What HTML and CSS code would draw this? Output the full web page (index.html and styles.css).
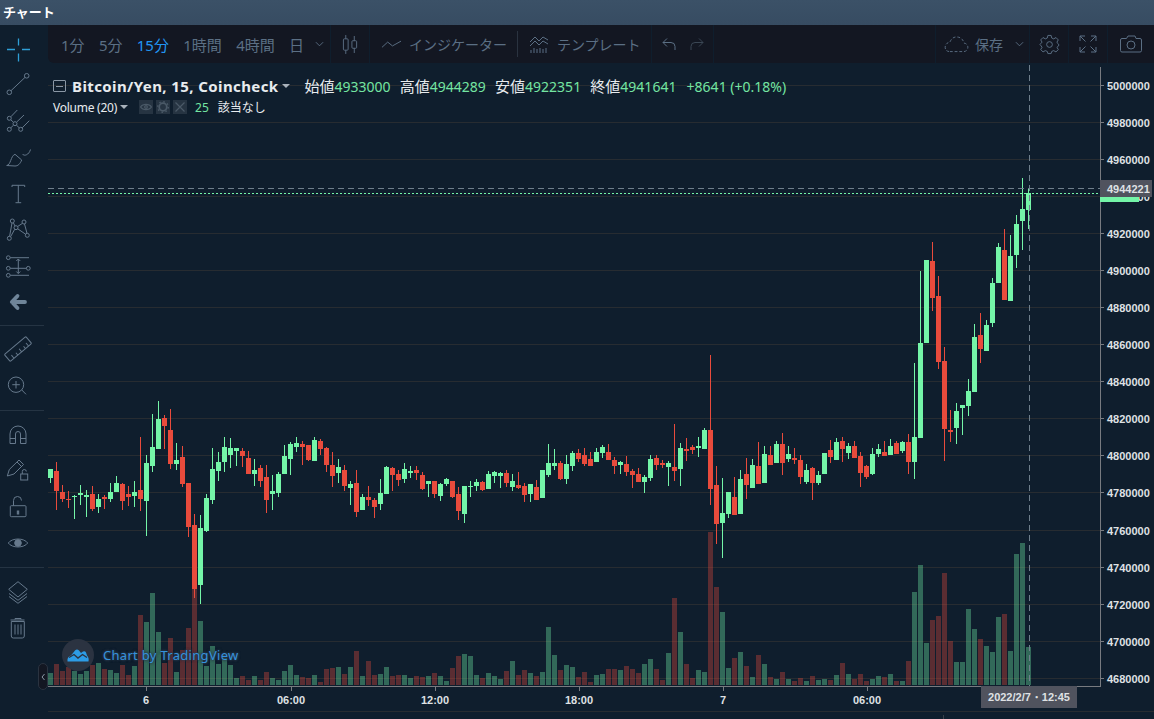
FILE: index.html
```html
<!DOCTYPE html>
<html lang="ja">
<head>
    <meta charset="UTF-8">
    <title>チャート</title>
    <link rel="stylesheet" href="styles.css">
</head>
<body>
    <header class="titlebar">チャート</header>
    <div class="main">
        <!-- 左ツールバー -->
        <aside class="sidebar">
            <div class="tool-group">
                <div class="tool"><svg viewBox="0 0 28 28" class="blue"><path d="M3 13.5h8M18 13.5h8M14.5 2.500v7M14.500 17.500v8"/></svg></div>
                <div class="tool"><svg viewBox="0 0 28 28"><circle cx="5.300" cy="20.300" r="2.300"/><circle cx="22.700" cy="3.800" r="2.300"/><path d="M7 18.700L21 5.400"/></svg></div>
                <div class="tool"><svg viewBox="0 0 28 28"><circle cx="5.300" cy="10.300" r="2"/><circle cx="11" cy="15.700" r="2"/><circle cx="5.300" cy="21.300" r="2"/><circle cx="16.700" cy="21.300" r="2"/><path d="M6.800 8.800L13.300 2M12.500 14.200L20 7M18.200 19.800L25.300 12.700M6.700 11.700L9.500 14.300M12.500 17.200L15.300 19.900M6.800 19.800L9.500 17.200"/></svg></div>
                <div class="tool"><svg viewBox="0 0 28 28"><path d="M2.700 21.500C7 21 6.500 12 11 10.300L17.700 16C16 20 14 22 11 22ZM18.500 10C20 12.500 25 11 26.500 5.500"/></svg></div>
                <div class="tool"><svg viewBox="0 0 28 28"><path d="M8 7V5.300H20.700V7M14.300 5.300V22.700M11.500 22.700H17.200"/></svg></div>
                <div class="tool"><svg viewBox="0 0 28 28"><circle cx="8.300" cy="5" r="2"/><circle cx="20" cy="6" r="2"/><circle cx="12" cy="11.700" r="2"/><circle cx="23.300" cy="19.300" r="2"/><circle cx="5.300" cy="22.300" r="2"/><path d="M5.600 20.300L8 7M9.300 6.700L11 10M13.600 10.500L18.500 7.300M20.500 8L23 17.300M13.700 12.800L21.600 18.200M10.700 13.300L6.600 20.700"/></svg></div>
                <div class="tool"><svg viewBox="0 0 28 28"><circle cx="4.300" cy="5.700" r="1.900"/><circle cx="4.300" cy="16.300" r="1.900"/><circle cx="4.300" cy="23.300" r="1.900"/><circle cx="24.300" cy="16.300" r="1.900"/><path d="M6.300 5.700H25M6.300 16.300H22.300M6.300 23.300H25M14.300 7V21.500M12.300 9L14.300 7L16.300 9M12.300 19.500L14.300 21.500L16.300 19.500"/></svg></div>
                <div class="tool"><svg viewBox="0 0 28 28" class="back"><path d="M21 14H8M13.500 8L7.800 14L13.500 20"/></svg></div>
            </div>
            <div class="tool-group mid">
                <div class="tool"><svg viewBox="0 0 28 28"><g transform="rotate(-40 14 14)"><rect x="0" y="9.500" width="28" height="9" rx="1"/><path d="M5 18.500v-4M10 18.500v-3M15 18.500v-4M20 18.500v-3M24 18.500v-4"/></g></svg></div>
                <div class="tool"><svg viewBox="0 0 28 28"><circle cx="12" cy="13.700" r="7.700"/><path d="M17.800 19L22 23.300M12 10v7.500M8.300 13.700h7.500"/></svg></div>
            </div>
            <div class="tool-group">
                <div class="tool"><svg viewBox="0 0 28 28"><path d="M6 22.500V13a8 8 0 0 1 16 0V22.500H16.500V13a2.500 2.500 0 0 0-5 0V22.500ZM6 17.500h5.500M16.500 17.500H22"/></svg></div>
                <div class="tool"><svg viewBox="0 0 28 28"><g transform="translate(0 -2)"><path d="M3.300 21L5.300 14.500L15 5L19.500 9.500L10 19ZM13 7L17.500 11.500"/><rect x="16.700" y="19" width="7" height="6"/><path d="M18.300 19V16.500a2 2 0 0 1 4 0"/></g></svg></div>
                <div class="tool"><svg viewBox="0 0 28 28"><rect x="6.300" y="12.700" width="15.700" height="11" rx="1"/><path d="M9.500 12.700V7.500a4 4 0 0 1 8 0"/><rect x="13.300" y="18" width="1.400" height="3" class="solid"/></svg></div>
                <div class="tool"><svg viewBox="0 0 28 28"><path d="M4.300 14C8 8.700 20 8.700 23.700 14C20 19.300 8 19.300 4.300 14Z"/><circle cx="14" cy="14" r="3.300" class="solid"/></svg></div>
            </div>
            <div class="tool-group last">
                <div class="tool"><svg viewBox="0 0 28 28"><path d="M14 3.700L23.300 11.300L14 19L4.700 11.300ZM5 15.500L14 22.300L23 15.500M5 18.500L14 25.300L23 18.500"/></svg></div>
                <div class="tool"><svg viewBox="0 0 28 28"><path d="M6.500 6H20.500M11 5.500V4.500H17V5.500M7.300 7.500H20.300V22a2 2 0 0 1-2 2H9.300a2 2 0 0 1-2-2ZM11 10.500V20.500M14 10.500V20.500M17 10.500V20.500"/></svg></div>
            </div>
            <button class="collapse"><svg viewBox="0 0 8 12"><path d="M5.500 3L3 6L5.500 9"/></svg></button>
        </aside>

        <div class="content">
            <!-- 上ツールバー -->
            <nav class="toolbar">
                <div class="panel intervals">
                    <span>1分</span><span>5分</span><span class="on">15分</span><span>1時間</span><span>4時間</span><span class="day">日</span>
                    <svg class="chev" viewBox="0 0 10 6"><path d="M1 1L5 5L9 1"/></svg>
                </div>
                <div class="panel p-candle">
                    <svg class="ic" viewBox="0 0 18 22"><path d="M4 1V5M4 17V21M13 2V7M13 15V20"/><rect x="1.500" y="5" width="5" height="12" rx="1"/><rect x="10.500" y="7" width="5" height="8" rx="1"/></svg>
                </div>
                <div class="panel p-ind">
                    <svg class="ic wave" viewBox="0 0 22 10"><path d="M1 8.500L7 3L12 7L21 2"/></svg>
                    <span class="ind-text">インジケーター</span>
                    <i class="sep"></i>
                    <svg class="ic tmpl" viewBox="0 0 20 20"><path d="M1 8L6 3L10 7L14 3L19 6M1 12L6 7L10 11L14 7L19 10M2 19V16M5 19V14M8 19V15M11 19V14M14 19V15M17 19V14"/></svg>
                    <span>テンプレート</span>
                </div>
                <div class="panel p-undo">
                    <svg class="ic arrow" viewBox="0 0 14 14"><path d="M5 1.500L1 5.500L5 9.500M1 5.500H9a4 4 0 0 1 4 4V13"/></svg>
                    <svg class="ic arrow dim" viewBox="0 0 14 14"><path d="M9 1.500L13 5.500L9 9.500M13 5.500H5a4 4 0 0 0-4 4V13"/></svg>
                </div>
                <div class="spacer"></div>
                <div class="panel p-save">
                    <svg class="ic cloud" viewBox="0 0 26 18"><path stroke-dasharray="3 2" d="M6 16.500H20a4.500 4.500 0 0 0 1-9C20 3.500 17 1 13 1C9 1 7 4 6 6.500C3 7 1 9 1 12C1 15 3 16.500 6 16.500Z"/></svg>
                    <span>保存</span>
                    <svg class="chev" viewBox="0 0 10 6"><path d="M1 1L5 5L9 1"/></svg>
                </div>
                <div class="panel p-icon">
                    <svg class="ic gear" viewBox="0 0 22 22"><circle cx="11" cy="11" r="3"/><path d="M9.300 1.500H12.700L13.300 4.200L15.400 5.100L17.800 3.700L20.200 6.200L18.800 8.500L19.700 10L21 11.500L19.700 13.300L18.800 14L20.200 16.300L17.800 18.800L15.400 17.400L13.300 18.300L12.700 20.500H9.300L8.700 18.300L6.600 17.400L4.200 18.800L1.800 16.300L3.200 14L2.300 12.500L1 11L2.300 9.500L3.200 8.500L1.800 6.200L4.200 3.700L6.600 5.100L8.700 4.200Z"/></svg>
                </div>
                <div class="panel p-icon">
                    <svg class="ic full" viewBox="0 0 18 18"><path d="M1 6V1H6M1 1L6.500 6.500M12 1H17V6M17 1L11.500 6.500M1 12V17H6M1 17L6.500 11.500M12 17H17V12M17 17L11.500 11.500"/></svg>
                </div>
                <div class="panel p-icon p-camera">
                    <svg class="ic cam" viewBox="0 0 22 18"><path d="M2 3.500H6.500L8 1H15L16 3.500H20a1.500 1.500 0 0 1 1.500 1.500V15.500a1.500 1.500 0 0 1-1.500 1.500H2a1.500 1.500 0 0 1-1.500-1.500V5A1.500 1.500 0 0 1 2 3.500Z"/><circle cx="11" cy="10" r="4"/></svg>
                </div>
            </nav>

            <section class="chart">
                <svg id="plot" class="plot" viewBox="48 63 1106 656"></svg>

                <!-- 凡例 -->
                <div class="legend">
                    <div class="legend-main">
                        <i class="minus"></i>
                        <b class="symbol">Bitcoin/Yen, 15, Coincheck</b><i class="caret"></i>
                        <div class="ohlc">
                            <span>始値<em>4933000</em></span>
                            <span>高値<em>4944289</em></span>
                            <span>安値<em>4922351</em></span>
                            <span>終値<em>4941641</em></span>
                            <em class="diff">+8641 (+0.18%)</em>
                        </div>
                    </div>
                    <div class="legend-vol">
                        <span class="vol-name">Volume (20)</span><i class="caret small"></i>
                        <div class="vol-btns">
                            <i><svg viewBox="0 0 14 14"><path d="M1.500 7C4 3.500 10 3.500 12.500 7C10 10.500 4 10.500 1.500 7Z"/><circle cx="7" cy="7" r="1.300"/></svg></i>
                            <i><svg viewBox="0 0 14 14"><circle cx="7" cy="7" r="3.800" stroke-width="1.800"/><circle cx="7" cy="7" r="5.300" stroke-dasharray="1.500 2.600" stroke-width="1.400"/></svg></i>
                            <i><svg viewBox="0 0 14 14"><path d="M2.500 2.500L11.500 11.500M11.500 2.500L2.500 11.500"/></svg></i>
                        </div>
                        <em>25</em><span class="na">該当なし</span>
                    </div>
                </div>

                <!-- ロゴ -->
                <div class="watermark">
                    <span class="wm-icon"><svg viewBox="0 0 22 14"><path d="M0.500 13.500C0 10 1.500 8 4 7.500L8 2.500Q10 0.500 12 2.500L14 5L16 3.500Q18 2.500 19 4.500L20 7.500C21.500 9 22 11 21.500 13.500Z"/><path class="cut" d="M2 9.500L7 6.500L11 10L15.500 6.500L20 9.500"/></svg></span>
                    <span class="wm-text">Chart by TradingView</span>
                </div>
            </section>
        </div>
    </div>
    <script src="chart.js"></script>
</body>
</html>
```
FILE: styles.css
```css
html,body{
    margin: 0;padding: 0;
}
body{
    width: 1154px; height: 719px;
    overflow: hidden;
    display: flex; flex-direction: column;
    background-color: #0f1e2d;
    font-family: "Noto Sans", "Noto Sans CJK JP", sans-serif;
}
i,em{
    font-style: normal;
}
svg{
    display: block;
}

/* タイトル */
.titlebar{
    height: 25px;
    flex: none;
    padding-left: 3px;
    line-height: 24px;
    font-size: 13px; font-weight: bold;
    font-family: "Noto Sans CJK JP", sans-serif;
    color: #fff;
    background-image: linear-gradient(to bottom, #3b5167, #374c62);
}
.main{
    flex: 1;
    display: flex;
    min-height: 0;
}

/* 左ツール */
.sidebar{
    width: 48px;
    flex: none;
    position: relative;
}
.tool-group{
    width: 44px;
    padding: 6px 0;
    border-bottom: 1px solid #253443;
}
.tool-group:first-child{
    padding: 7px 0 5px;
}
.tool-group.mid{
    padding: 5px 0 7px;
}
.tool-group.last{
    border-bottom: none;
}
.tool{
    width: 36px; height: 36px;
    display: flex; align-items: center; justify-content: center;
}
.tool svg{
    width: 28px; height: 28px;
    fill: none;
    stroke: #66798c;
    stroke-width: 1;
}
.tool svg.blue{
    stroke: #2f9fd6;
    stroke-width: 1.300;
}
.tool svg.back{
    stroke: #6f8599;
    stroke-width: 3.800;
    stroke-linejoin: round;
    stroke-linecap: round;
}
.tool svg .solid{
    fill: #66798c;
}
/* 折りたたみ */
.collapse{
    position: absolute;
    left: 38px; top: 638px;
    width: 10px; height: 27px;
    padding: 0;
    background-color: #131722;
    border: 1px solid #2a3340;
    border-radius: 5px;
}
.collapse svg{
    width: 8px; height: 12px;
    fill: none; stroke: #8a97a5; stroke-width: 1;
}

.content{
    flex: 1;
    min-width: 0;
    display: flex; flex-direction: column;
}

/* 上ツール */
.toolbar{
    height: 38px;
    flex: none;
    display: flex;
    gap: 1px;
    font-size: 14px;
    color: #5b6f84;
    font-family: "Noto Sans", "Noto Sans CJK JP", sans-serif;
}
.panel{
    display: flex; align-items: center;
    background-color: #131722;
    box-sizing: border-box;
    white-space: nowrap;
}
.spacer{
    flex: 1;
    background-color: #131722;
}
.intervals{
    width: 282px;
    padding-left: 13px;
    gap: 14.300px;
    font-size: 15px;
    border-bottom-left-radius: 6px;
}
.intervals .on{
    color: #2196f3;
}
.chev{
    width: 9px; height: 6px;
    fill: none; stroke: #5b6f84; stroke-width: 1;
}
.intervals .chev{
    margin-left: -3px;
}
.ic{
    flex: none;
    fill: none; stroke: #5b6f84; stroke-width: 1;
}
.p-candle{
    width: 38px;
    justify-content: center;
}
.p-candle .ic{
    width: 17px; height: 21px;
}
.p-ind{
    width: 281px;
    padding-left: 11px;
}
.wave{
    width: 21px; height: 10px;
}
.ind-text{
    margin-left: 7px;
}
.sep{
    width: 1px; height: 26px;
    margin: 0 11px 0 10px;
    background-color: #2a3340;
}
.tmpl{
    width: 20px; height: 20px;
    margin-right: 8px;
}
.p-undo{
    width: 61px;
    padding-left: 10px;
    gap: 14px;
}
.arrow{
    width: 14px; height: 14px;
}
.arrow.dim{
    stroke: #3a4654;
}
.p-save{
    width: 93px;
    padding-left: 8px;
}
.cloud{
    width: 25px; height: 17px;
    margin-right: 6px;
}
.p-save .chev{
    margin-left: 12px;
}
.p-icon{
    width: 38px;
    justify-content: center;
}
.p-camera{
    width: 46px;
}
.gear{
    width: 21px; height: 21px;
}
.full{
    width: 18px; height: 18px;
}
.cam{
    width: 22px; height: 18px;
}

/* チャート */
.chart{
    flex: 1;
    position: relative;
    min-height: 0;
}
.plot{
    position: absolute;
    left: 0; top: 0;
    width: 1106px; height: 656px;
}
.axis-text{
    font-family: "Liberation Sans", sans-serif;
    font-size: 11px; font-weight: bold;
    fill: #dfe1e4;
}

/* 凡例 */
.legend{
    position: absolute;
    left: 5px; top: 13px;
    color: #e8ecef;
}
.legend-main{
    display: flex; align-items: center;
    height: 20px;
}
.minus{
    width: 11px; height: 10px;
    margin-right: 6px;
    border: 1px solid #8a97a5;
    border-radius: 1px;
    background-image: linear-gradient(#8a97a5, #8a97a5);
    background-size: 7px 1px;
    background-position: center;
    background-repeat: no-repeat;
}
.symbol{
    font-size: 15px;
    font-weight: 700;
    letter-spacing: .4px;
    white-space: nowrap;
}
.caret{
    width: 0; height: 0;
    margin-left: 3px;
    border: 4px solid transparent;
    border-top-color: #a9b2bb;
    border-bottom: none;
}
.ohlc{
    display: flex; align-items: baseline;
    margin-left: 15px;
    margin-bottom: 2px;
    gap: 9.200px;
    font-size: 15px;
    white-space: nowrap;
}
.ohlc span{
    display: block;
}
.ohlc em{
    font-size: 14px;
}
.legend em{
    color: #74e5a2;
}
.ohlc .diff{
    margin-left: 1px;
}
.legend-vol{
    display: flex; align-items: center;
    height: 16px;
    margin-top: 3px;
    font-size: 12px;
    white-space: nowrap;
}
.vol-name{
    letter-spacing: -.25px;
}
.vol-btns{
    display: flex;
    margin-left: 11px;
    gap: 3px;
}
.vol-btns i{
    width: 14px; height: 14px;
    background-color: #263442;
}
.vol-btns svg{
    fill: none; stroke: #4a5967; stroke-width: 1.200;
}
.legend-vol em{
    margin-left: 8px;
}
.na{
    margin-left: 9px;
}

/* ロゴ */
.watermark{
    position: absolute;
    left: 14px; top: 576px;
    display: flex; align-items: center;
    font-size: 13px;
    pointer-events: none;
}
.wm-icon{
    width: 32px; height: 32px;
    display: flex; align-items: center; justify-content: center;
    border-radius: 50%;
    background-color: #2b3341;
}
.wm-icon svg{
    width: 22px; height: 14px;
    fill: #2d9ce6;
}
.wm-icon .cut{
    fill: none; stroke: #2b3341; stroke-width: 1.400;
}
.wm-text{
    margin-left: 9px;
    color: #3592dc;
    letter-spacing: .3px;
    text-shadow: 0 0 3px #2b3a4e, 0 0 3px #2b3a4e, 0 0 2px #2b3a4e;
}
```
FILE: chart.js
```js
// ローソク足データ : [色, 実体上, 実体下, ヒゲ上, ヒゲ下, 出来高の高さ]  y値は画面座標
var G = "g", R = "r";
var bars = [
[G,469,478,469,483,12],[R,471,491,462,510,21],[R,492,499,485,502,14],[R,499,500,491,508,18],[G,496,497,495,519,14],[G,493,495,485,505,11],[G,495,497,490,517,14],[R,494,509,486,511,20],
[G,499,507,494,513,22],[R,497,499,495,509,16],[G,492,499,483,502,15],[G,483,492,476,492,12],[R,484,501,483,510,20],[R,494,497,486,506,10],[G,492,496,481,507,19],[R,490,499,437,511,70],
[G,463,501,455,536,63],[G,447,466,414,472,92],[G,419,449,401,449,53],[R,418,426,415,449,22],[R,430,464,409,469,47],[G,460,464,443,470,13],[R,457,484,446,487,35],[R,483,527,483,537,57],
[R,525,589,514,598,96],[G,528,585,515,604,64],[G,498,531,494,532,19],[G,469,500,448,504,39],[G,462,471,452,481,21],[G,447,462,437,472,27],[G,448,455,438,468,20],[G,448,451,448,466,7],
[R,451,456,448,467,9],[R,458,474,451,474,5],[G,470,474,459,486,9],[R,468,481,465,487,5],[R,477,500,465,513,13],[G,491,494,475,510,7],[G,474,493,472,497,5],[G,456,474,445,474,14],
[G,444,459,442,475,20],[G,443,447,437,452,10],[R,444,447,441,465,8],[R,445,460,445,461,7],[G,440,461,437,461,10],[R,441,449,439,455,3],[R,448,465,447,472,16],[R,465,476,452,487,17],
[G,467,473,459,483,18],[R,470,486,465,491,11],[G,484,488,481,505,18],[R,483,512,470,517,34],[G,497,510,494,510,9],[R,497,500,486,506,24],[R,500,507,498,518,10],[G,493,504,479,510,11],
[G,467,494,466,494,18],[R,468,475,467,491,9],[R,474,480,470,486,10],[G,469,479,463,483,10],[G,471,473,466,478,7],[R,470,473,466,480,9],[R,475,489,472,490,8],[G,481,484,481,497,9],
[R,481,494,481,498,12],[G,484,496,483,501,9],[G,479,484,478,486,4],[R,481,497,481,498,17],[R,494,511,487,520,29],[G,486,514,486,523,31],[G,486,487,481,497,29],[G,482,486,479,491,10],
[R,482,490,481,491,7],[G,474,489,471,489,12],[G,472,476,471,483,9],[G,473,476,472,488,6],[R,473,483,470,487,14],[G,481,487,474,491,24],[R,485,488,472,489,10],[R,486,495,483,502,15],
[G,484,494,484,502,12],[R,487,500,480,500,9],[G,470,498,470,498,13],[G,463,475,444,477,58],[G,463,466,449,470,30],[R,463,479,461,480,15],[G,464,479,455,484,20],[G,453,466,451,471,18],
[R,453,459,449,462,8],[R,455,464,448,466,13],[R,459,466,452,466,3],[G,452,462,448,462,10],[G,447,453,445,458,11],[R,452,460,444,460,16],[R,460,466,457,474,16],[G,462,465,461,474,15],
[R,464,472,456,476,19],[R,471,475,469,488,16],[R,474,482,468,482,12],[G,477,482,475,493,21],[G,459,478,455,481,26],[R,458,465,455,470,16],[R,463,465,460,468,5],[G,463,467,461,486,32],
[R,467,471,424,481,87],[G,448,469,443,486,53],[R,449,451,438,461,21],[R,447,450,445,454,7],[G,446,448,437,457,15],[G,430,449,428,449,13],[R,430,489,355,505,153],[R,485,524,466,544,98],
[G,513,523,478,558,73],[G,492,514,492,518,17],[R,497,515,477,515,27],[G,479,514,470,514,33],[R,474,485,458,499,19],[G,465,488,459,488,8],[R,466,484,442,484,30],[G,454,483,446,483,21],
[R,455,465,446,465,8],[G,444,463,441,463,6],[R,444,463,433,475,13],[G,454,459,446,462,6],[R,458,460,448,464,4],[R,460,477,455,484,7],[G,470,482,464,484,4],[R,468,483,467,500,9],
[G,475,483,471,485,5],[G,453,474,453,474,6],[R,450,457,440,463,5],[G,442,460,438,460,10],[R,441,449,437,462,22],[G,446,453,443,459,11],[R,446,458,441,458,6],[R,456,473,452,487,11],
[R,466,477,465,479,4],[G,454,474,448,475,6],[G,449,454,444,457,9],[R,452,456,441,456,8],[G,446,455,439,455,11],[R,443,454,441,454,4],[G,442,451,441,453,4],[R,442,462,434,474,24],
[G,437,462,363,479,93],[G,343,438,271,438,120],[G,260,343,260,343,42],[R,261,298,242,311,65],[R,296,362,276,369,69],[R,361,429,347,461,112],[R,430,432,410,442,44],[G,411,428,403,444,23],
[G,405,408,405,435,23],[G,391,406,379,416,76],[G,337,392,324,392,56],[R,335,349,313,363,46],[G,325,351,320,351,39],[G,283,323,278,327,33],[G,247,283,243,283,68],[R,250,300,229,300,71],
[G,256,301,235,301,34],[G,224,255,215,268,131],[G,209,221,178,250,142],[G,193,210,189,229,38]
];

var plot = document.getElementById("plot");
var NS = "http://www.w3.org/2000/svg";

function add(tag, attrs, text){
    var el = document.createElementNS(NS, tag);
    for(var k in attrs){
        el.setAttribute(k, attrs[k]);
    }
    if(text) el.textContent = text;
    plot.appendChild(el);
    return el;
}
function box(x, y, w, h, fill){
    add("rect", {x:x, y:y, width:w, height:h, fill:fill});
}

// 横グリッドと価格ラベル
for(var i = 0; i <= 16; i++){
    var gy = Math.floor(85.3 + 37.06 * i);
    box(48, gy, 1052, 1, "#272c31");
    box(1100, gy, 4, 1, "#787b80");
    add("text", {x:1107, y:gy + 5, "class":"axis-text"}, String(5000000 - 20000 * i));
}

// 出来高
bars.forEach(function(b, n){
    var h = b[5];
    box(48 + 6 * n, 685 - h, 5, h, b[0] == G ? "rgba(118,247,171,.35)" : "rgba(232,74,60,.35)");
});

// ローソク足
bars.forEach(function(b, n){
    var c = b[0] == G ? "#74f5a8" : "#e84b3c";
    box(50 + 6 * n, b[3], 1, b[4] - b[3], c);
    box(48 + 6 * n, b[1], 5, Math.max(b[2] - b[1], 1), c);
});

// 軸
box(1100, 67, 1, 620, "#787b80");
box(48, 686, 1053, 1, "#787b80");
box(48, 711, 1106, 1, "#272c31");
box(943, 715, 1, 4, "#3a4048");

var times = [[146,"6"],[291,"06:00"],[435,"12:00"],[579,"18:00"],[723,"7"],[867,"06:00"]];
times.forEach(function(t){
    box(t[0], 687, 1, 4, "#787b80");
    add("text", {x:t[0], y:704, "text-anchor":"middle", "class":"axis-text"}, t[1]);
});

// クロスヘア + 現在値ライン
add("path", {d:"M1029.500 65V686", stroke:"#6f7f8c", "stroke-dasharray":"6 4", fill:"none"});
add("path", {d:"M48 188.500H1100", stroke:"#6f7f8c", "stroke-dasharray":"6 4", fill:"none"});
add("path", {d:"M48 193.500H1100", stroke:"#74f5a8", "stroke-dasharray":"2 2", fill:"none"});
box(1100, 197, 39, 5, "#74f5a8");
box(1100, 180, 52, 17, "#50535e");
add("text", {x:1107, y:192.500, "class":"axis-text"}, "4944221");
box(981, 686, 96, 22, "#50535e");
add("text", {x:1029, y:701, "text-anchor":"middle", "class":"axis-text"}, "2022/2/7・12:45");
```
